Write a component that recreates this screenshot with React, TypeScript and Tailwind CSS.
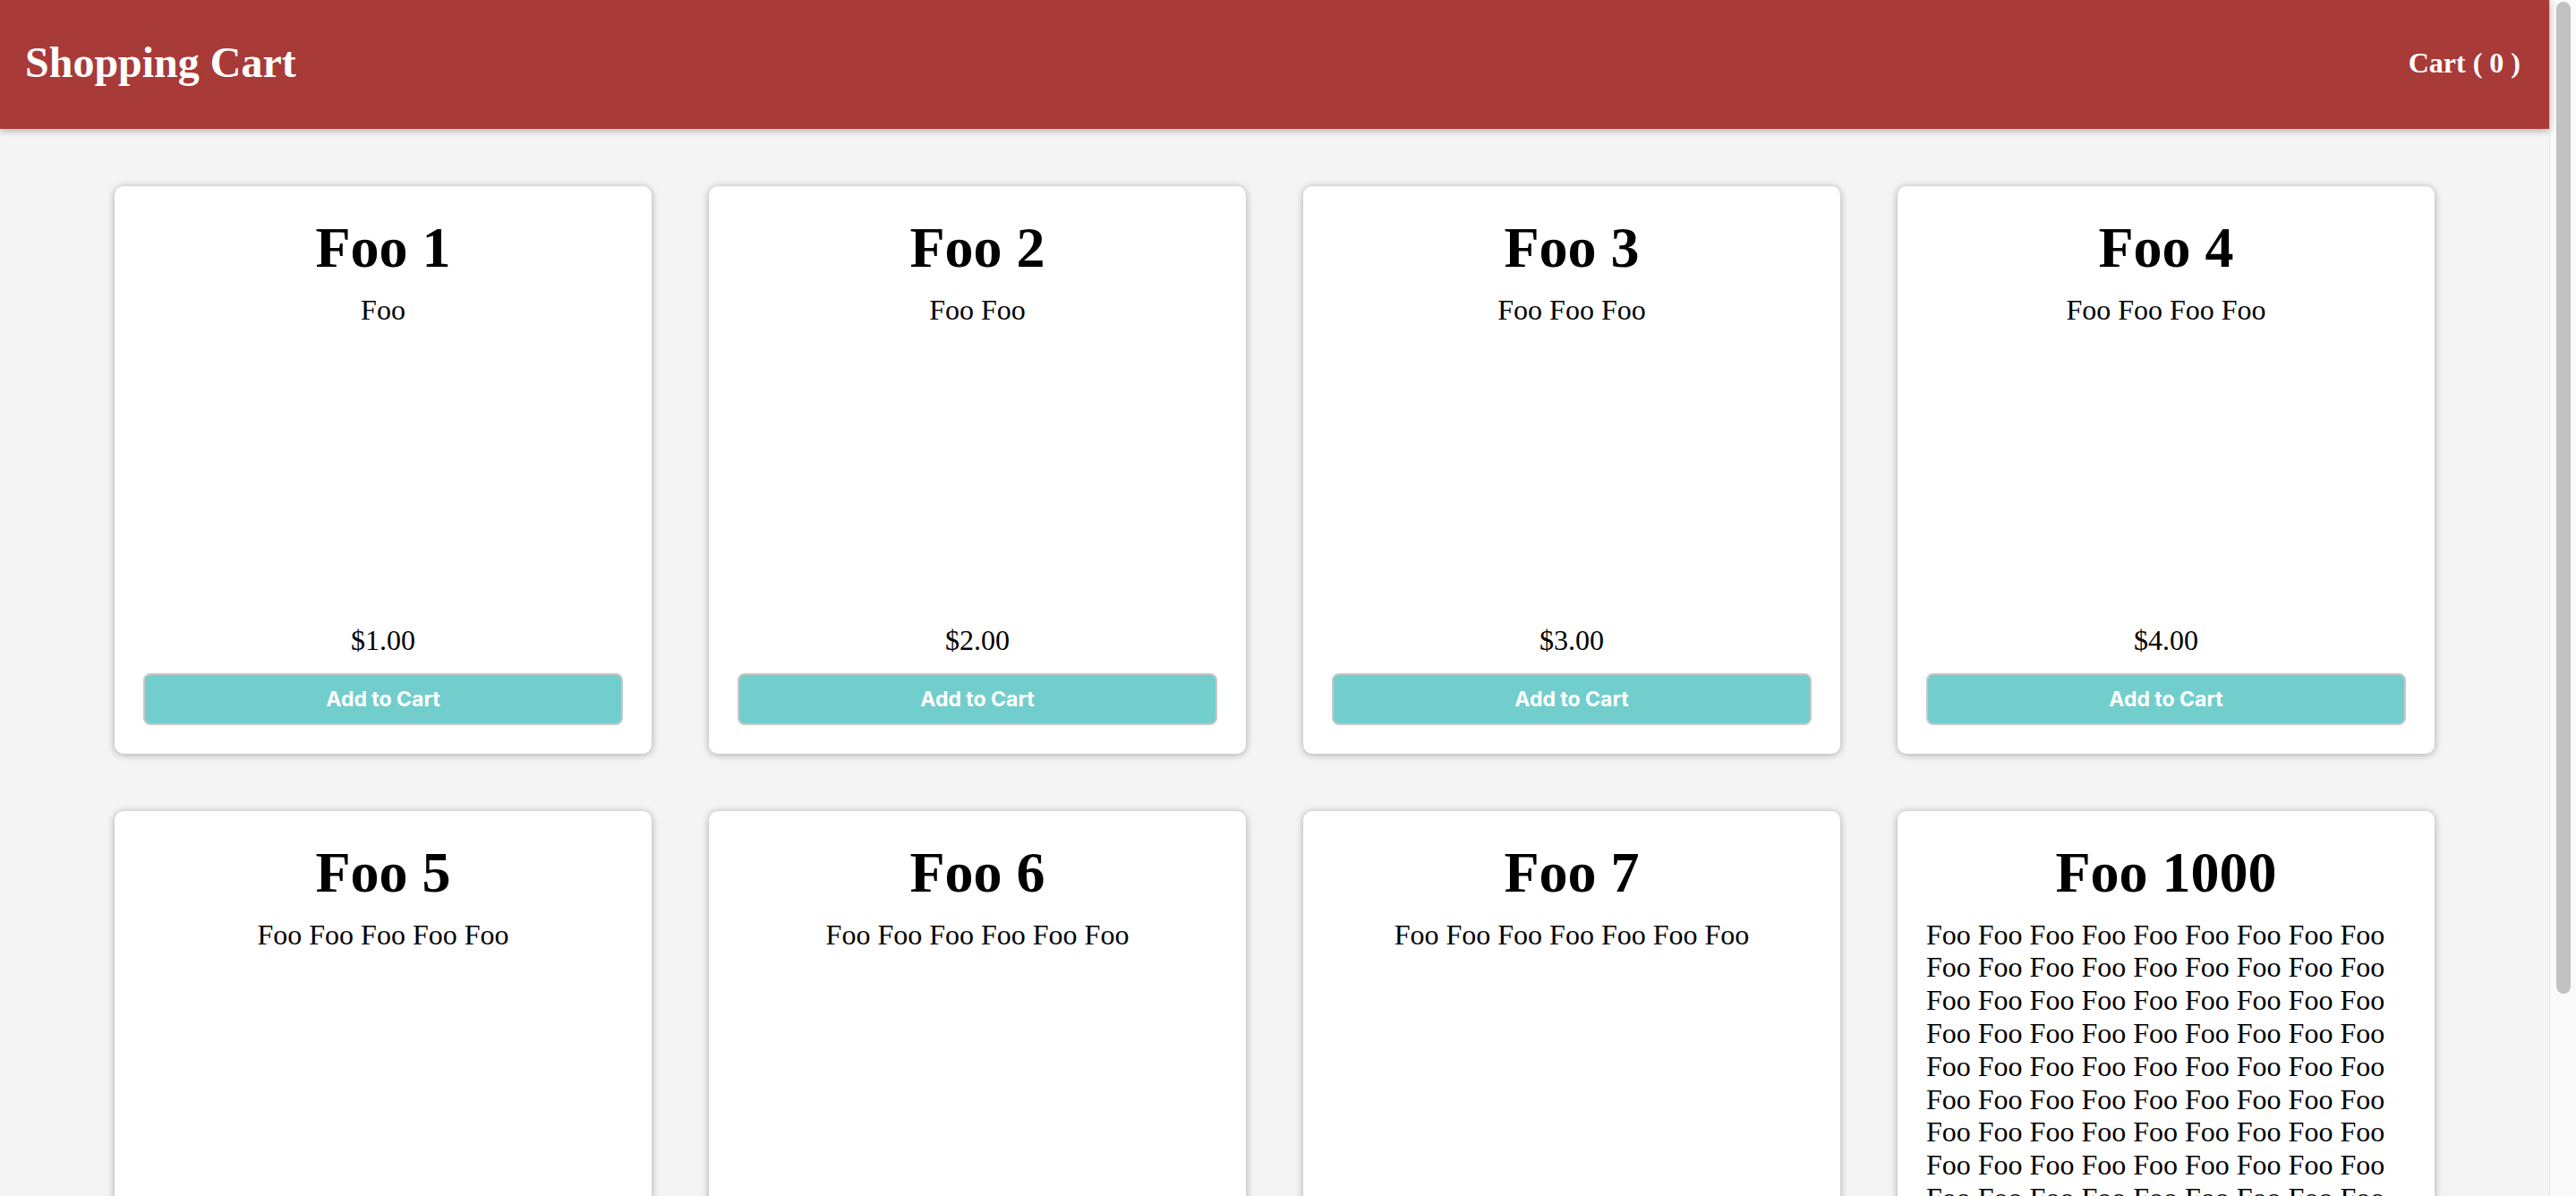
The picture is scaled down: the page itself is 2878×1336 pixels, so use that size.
import React from "react";

type Product = {
  id: number;
  name: string;
  description: string;
  price: number;
};

const foos = (n: number) => Array.from({ length: n }, () => "Foo").join(" ");

const products: Product[] = [
  { id: 1, name: "Foo 1", description: foos(1), price: 1 },
  { id: 2, name: "Foo 2", description: foos(2), price: 2 },
  { id: 3, name: "Foo 3", description: foos(3), price: 3 },
  { id: 4, name: "Foo 4", description: foos(4), price: 4 },
  { id: 5, name: "Foo 5", description: foos(5), price: 5 },
  { id: 6, name: "Foo 6", description: foos(6), price: 6 },
  { id: 7, name: "Foo 7", description: foos(7), price: 7 },
  { id: 1000, name: "Foo 1000", description: foos(90), price: 1000 },
];

function ProductCard({ product }: { product: Product }) {
  return (
    <div className="flex flex-col items-center bg-white rounded-[10px] shadow-[0_1px_8px_rgba(0,0,0,0.32)] p-8 min-h-[634px]">
      <h2 className="text-[64px] font-bold leading-[1.15] mb-[14px]">{product.name}</h2>
      <p className="text-[32px] leading-[1.15]">{product.description}</p>
      <div className="flex-1" />
      <p className="text-[32px] leading-[1.15]">${product.price.toFixed(2)}</p>
      <button className="mt-[18px] w-full h-[58px] bg-[#72cecd] border-2 border-[#c8c8c8] rounded-[8px] text-white font-bold text-[23px] font-['Inter',sans-serif]">
        Add to Cart
      </button>
    </div>
  );
}

export default function App() {
  return (
    <div className="flex h-screen overflow-hidden bg-[#f4f4f4] text-black font-['Liberation_Serif',serif]">
      <div className="flex-1 min-w-0 flex flex-col">
        {/* header */}
        <header className="h-[144px] shrink-0 bg-[#a83a38] shadow-[0_2px_8px_rgba(0,0,0,0.3)] relative z-10 flex items-center justify-between pl-7 pr-8 pb-[5px] text-white">
          <h1 className="text-[48px] font-bold leading-none">Shopping Cart</h1>
          <span className="text-[32px] font-bold leading-none">Cart ( 0 )</span>
        </header>

        {/* products */}
        <main className="shrink-0 grid grid-cols-[repeat(4,600px)] justify-center gap-16 py-16">
          {products.map((p) => (
            <ProductCard key={p.id} product={p} />
          ))}
        </main>
      </div>

      {/* scrollbar */}
      <div className="w-[30px] shrink-0 bg-[#fafafa] border-l border-[#e6e6e6] pt-[2px] pl-[7px]">
        <div className="w-[16px] h-[1108px] rounded-full bg-[#c2c2c2]" />
      </div>
    </div>
  );
}
